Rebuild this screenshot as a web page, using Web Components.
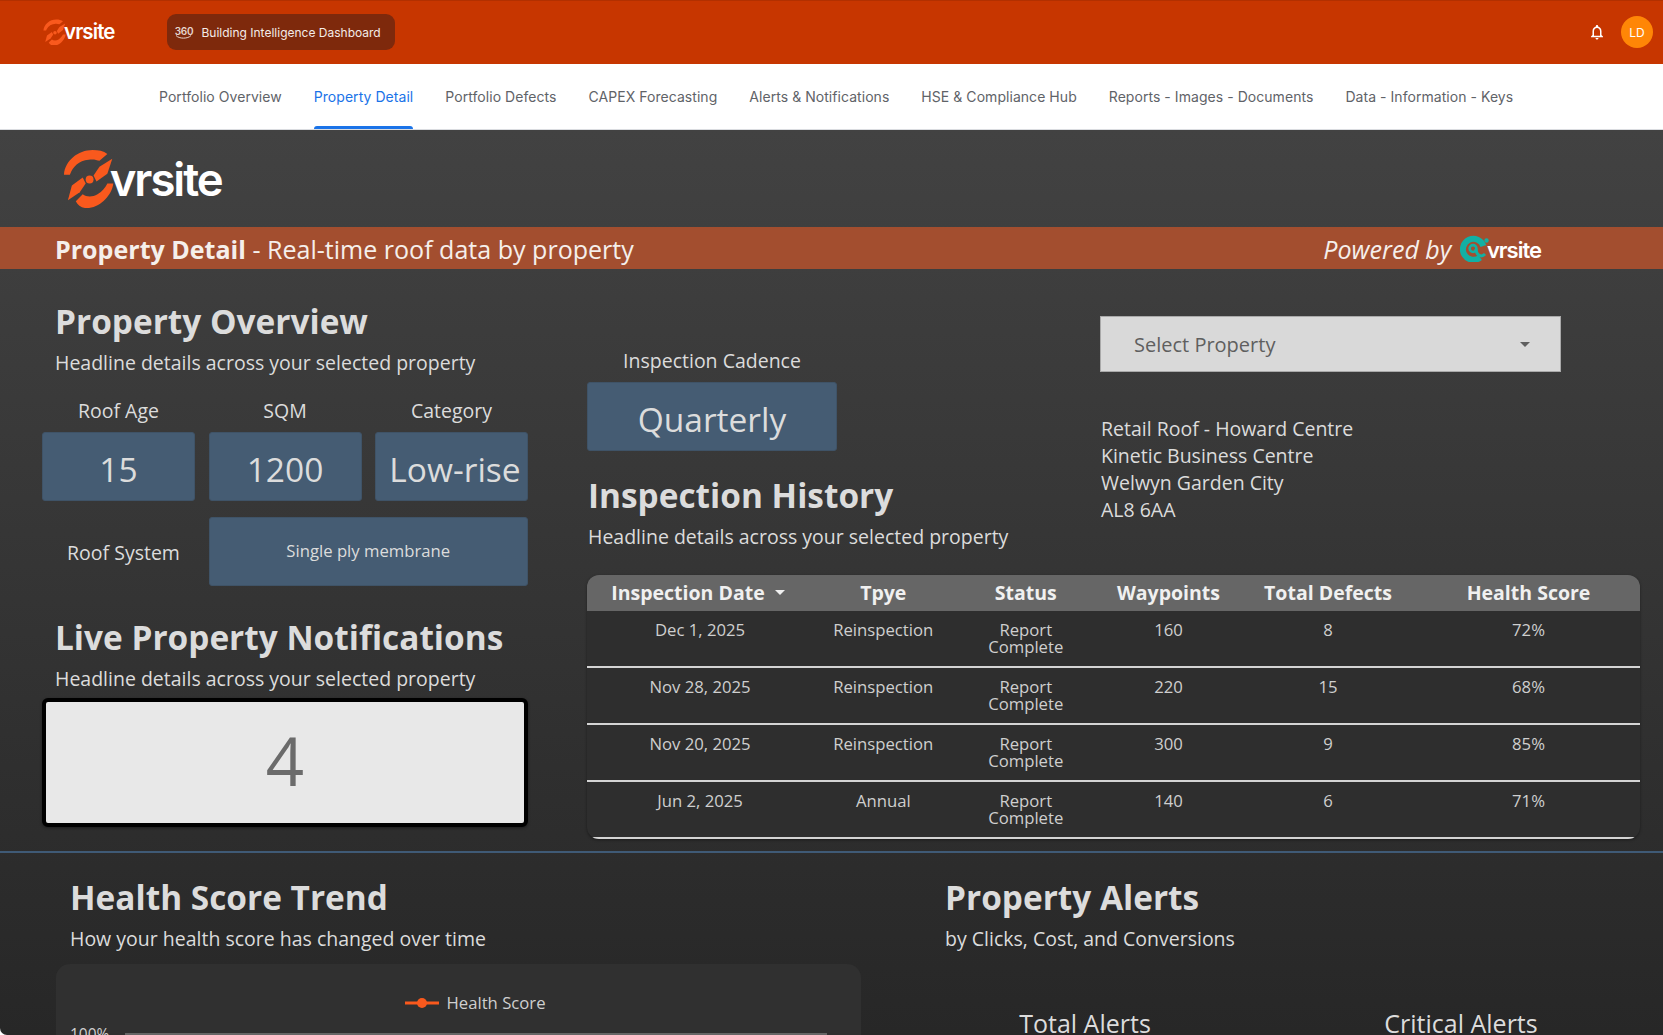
<!DOCTYPE html>
<html lang="en">
<head>
<meta charset="utf-8">
<title>Property Detail</title>
<style>
  html, body { margin: 0; height: 100%; background: #fff; overflow: hidden; }
  body { font-family: "Open Sans", "Liberation Sans", sans-serif; }
</style>
</head>
<body>
<top-bar></top-bar>
<nav-tabs></nav-tabs>
<report-page></report-page>

<script>
/*
 * Logo: the swirl mark plus the wordmark as real text.
 * Scales from font-size on the host, teal="" switches to the Powered by mark.
 */
const logoTemplate = document.createElement('template')
logoTemplate.innerHTML = `
  <style>
    :host {
      display: inline-flex;
      align-items: center;
      color: #fff;
      line-height: 1;
    }
    svg { height: 1.3em; width: auto; flex: none; display: block; }
    span {
      font-family: Inter, "Liberation Sans", sans-serif;
      font-weight: 600;
      letter-spacing: -0.045em;
      margin-left: -0.1em;
      padding-top: 0.06em;
    }
    svg.teal { height: 1.23em; }
    svg.teal + span { margin-left: -0.16em; padding-top: 0.1em; }
  </style>
  <svg viewBox="13 8 52 60">
    <path fill="#f9591d" d="M14 34C15 20 28 9 43 9c6 0 11 1 15 4l-8 7c-3-1-7-2-11-1C29 20 23 26 20 34Z"/>
    <path fill="#f9591d" d="M26 61l7-7c4 3 10 3 15 0 5-3 8-7 10-11h6c-1 11-13 25-27 25-5 0-9-3-11-7Z"/>
    <path fill="#f9591d" d="M63 18 50 26 44 35 47 41 58 33Z"/>
    <path fill="#f9591d" d="M18 60 30 52 36 43 33 37 22 45Z"/>
    <circle cx="40" cy="39" r="4" fill="#f9591d"/>
  </svg>
  <span>vrsite</span>
`
const tealTemplate = document.createElement('template')
tealTemplate.innerHTML = `
  <svg class="teal" viewBox="0 0 30 27">
    <path fill="none" stroke="#12b0a4" stroke-width="6" d="M20 22.5A10.5 10.5 0 1 1 23.4 11"/>
    <circle cx="13" cy="13.5" r="3.4" fill="none" stroke="#12b0a4" stroke-width="2.6"/>
    <path fill="none" stroke="#12b0a4" stroke-width="3" d="M16 14c0 6 5 9 9 5"/>
    <circle cx="26.5" cy="5.5" r="2.2" fill="#12b0a4"/>
  </svg>
`
customElements.define('vrsite-logo',
  class extends HTMLElement {
    constructor () {
      super()
      this.attachShadow({ mode: 'open' })
        .appendChild(logoTemplate.content.cloneNode(true))
      if (this.hasAttribute('teal')) {
        this.shadowRoot.querySelector('svg').replaceWith(tealTemplate.content.cloneNode(true))
      }
    }
  }
)

/*
 * Orange application bar.
 */
const topBarTemplate = document.createElement('template')
topBarTemplate.innerHTML = `
  <style>
    :host {
      display: flex;
      align-items: center;
      box-sizing: border-box;
      height: 64px;
      padding: 0 10px 1px 43px;
      background: #c73600;
      border-top: 1px solid #b23000;
      font-family: Inter, "Liberation Sans", sans-serif;
      color: #fff;
    }
    vrsite-logo { font-size: 20.5px; }
    .pill {
      display: flex;
      align-items: center;
      gap: 9px;
      height: 36px;
      margin-left: 53px;
      padding: 0 14px 0 8px;
      border-radius: 9px;
      background: #7e290c;
      font-size: 12px;
      color: #f4ece8;
    }
    .badge {
      display: flex;
      flex-direction: column;
      align-items: center;
      width: 17px;
      font-size: 10px;
      font-weight: 600;
      line-height: 10px;
      color: #e6d6cf;
      letter-spacing: -0.3px;
    }
    .badge svg { display: block; margin-top: -1px; }
    .spacer { flex: 1; }
    .bell { display: block; margin-right: 15px; }
    .avatar {
      display: grid;
      place-items: center;
      width: 32px;
      height: 32px;
      border-radius: 50%;
      background: #ff8606;
      font-size: 12px;
    }
  </style>
  <vrsite-logo></vrsite-logo>
  <div class="pill">
    <span class="badge">360
      <svg width="17" height="4" viewBox="0 0 17 4"><path d="M1 .5c3 3.5 12 3.5 15 0" fill="none" stroke="#e6d6cf" stroke-width="1"/></svg>
    </span>
    Building Intelligence Dashboard
  </div>
  <div class="spacer"></div>
  <svg class="bell" width="18" height="18" viewBox="0 0 24 24" fill="#fff"><path d="M12 22c1.1 0 2-.9 2-2h-4c0 1.1.9 2 2 2zm6-6v-5c0-3.07-1.63-5.64-4.5-6.32V4c0-.83-.67-1.5-1.5-1.5s-1.5.67-1.5 1.5v.68C7.64 5.36 6 7.92 6 11v5l-2 2v1h16v-1l-2-2zm-2 1H8v-6c0-2.48 1.51-4.5 4-4.5s4 2.02 4 4.5v6z"/></svg>
  <div class="avatar">LD</div>
`
customElements.define('top-bar',
  class extends HTMLElement {
    constructor () {
      super()
      this.attachShadow({ mode: 'open' })
        .appendChild(topBarTemplate.content.cloneNode(true))
    }
  }
)

/*
 * White tab row.
 */
const navTemplate = document.createElement('template')
navTemplate.innerHTML = `
  <style>
    :host {
      display: flex;
      gap: 32px;
      box-sizing: border-box;
      height: 66px;
      padding-left: 159px;
      background: #fff;
      border-bottom: 1px solid #dadce0;
      font-family: Inter, "Liberation Sans", sans-serif;
      font-size: 14px;
      letter-spacing: 0.05px;
      color: #5f6368;
    }
    a {
      display: flex;
      align-items: center;
      position: relative;
      white-space: nowrap;
    }
    a.active { color: #1a73e8; }
    a.active::after {
      content: '';
      position: absolute;
      left: 0;
      right: 0;
      bottom: 0;
      height: 3px;
      border-radius: 3px 3px 0 0;
      background: #1a73e8;
    }
  </style>
  <a>Portfolio Overview</a>
  <a class="active">Property Detail</a>
  <a>Portfolio Defects</a>
  <a>CAPEX Forecasting</a>
  <a>Alerts &amp; Notifications</a>
  <a>HSE &amp; Compliance Hub</a>
  <a>Reports - Images - Documents</a>
  <a>Data - Information - Keys</a>
`
customElements.define('nav-tabs',
  class extends HTMLElement {
    constructor () {
      super()
      this.attachShadow({ mode: 'open' })
        .appendChild(navTemplate.content.cloneNode(true))
    }
  }
)

/*
 * Heading with a sub line, used by every panel.
 */
const headTemplate = document.createElement('template')
headTemplate.innerHTML = `
  <style>
    :host { display: block; color: #dcdcdc; }
    h2 { margin: -1px 0 0; font-size: 33.4px; line-height: 44px; font-weight: 700; white-space: nowrap; }
    p { margin: 6px 0 0; font-size: 19.5px; line-height: 28px; white-space: nowrap; }
  </style>
  <h2><slot name="title"></slot></h2>
  <p><slot></slot></p>
`
customElements.define('section-head',
  class extends HTMLElement {
    constructor () {
      super()
      this.attachShadow({ mode: 'open' })
        .appendChild(headTemplate.content.cloneNode(true))
    }
  }
)

/*
 * Blue scorecard.
 */
const tileTemplate = document.createElement('template')
tileTemplate.innerHTML = `
  <style>
    :host {
      display: flex;
      align-items: center;
      justify-content: center;
      box-sizing: border-box;
      height: 69px;
      padding-top: 4px;
      background: #455c73;
      border: 1px solid #3f5367;
      border-radius: 3px;
      color: #dcdcdc;
      font-size: 33.5px;
      white-space: nowrap;
    }
    :host([small]) { font-size: 16.7px; padding-top: 0; padding-bottom: 2px; }
    :host([nudge]) { padding-left: 7px; }
  </style>
  <slot></slot>
`
customElements.define('stat-tile',
  class extends HTMLElement {
    constructor () {
      super()
      this.attachShadow({ mode: 'open' })
        .appendChild(tileTemplate.content.cloneNode(true))
    }
  }
)

/*
 * Inspection history table, rows come from this list.
 */
const inspections = [
  ['Dec 1, 2025', 'Reinspection', 'Report Complete', '160', '8', '72%'],
  ['Nov 28, 2025', 'Reinspection', 'Report Complete', '220', '15', '68%'],
  ['Nov 20, 2025', 'Reinspection', 'Report Complete', '300', '9', '85%'],
  ['Jun 2, 2025', 'Annual', 'Report Complete', '140', '6', '71%']
]
const tableTemplate = document.createElement('template')
tableTemplate.innerHTML = `
  <style>
    :host {
      display: block;
      border-radius: 12px;
      background: #2e2e2e;
      box-shadow: 0 1px 3px rgba(0, 0, 0, 0.4);
      overflow: hidden;
      font-size: 16.7px;
      line-height: 17px;
      color: #cfcfcf;
    }
    .row {
      display: grid;
      grid-template-columns: 226px 140.5px 144.5px 141px 178px 1fr;
      text-align: center;
    }
    .head {
      box-sizing: border-box;
      height: 36px;
      padding-bottom: 2px;
      align-items: center;
      background: #666;
      color: #f0f0f0;
      font-size: 19.5px;
      font-weight: 700;
    }
    .head i {
      display: inline-block;
      margin: 0 4px 3px 5px;
      border: 5px solid transparent;
      border-top: 5px solid #f0f0f0;
      border-bottom: 0;
      vertical-align: middle;
    }
    .body {
      box-sizing: border-box;
      height: 57px;
      padding-top: 10px;
      border-bottom: 2px solid #d4d4d4;
    }
    .body div:nth-child(3) { padding: 0 30px; }
  </style>
  <div class="row head">
    <div>Inspection Date <i></i></div><div>Tpye</div><div>Status</div><div>Waypoints</div><div>Total Defects</div><div>Health Score</div>
  </div>
`
customElements.define('inspection-table',
  class extends HTMLElement {
    constructor () {
      super()
      this.attachShadow({ mode: 'open' })
        .appendChild(tableTemplate.content.cloneNode(true))

      for (const row of inspections) {
        const rowEl = document.createElement('div')
        rowEl.className = 'row body'
        for (const value of row) {
          const cell = document.createElement('div')
          cell.textContent = value
          rowEl.append(cell)
        }
        this.shadowRoot.append(rowEl)
      }
    }
  }
)

/*
 * Property dropdown.
 */
const selectTemplate = document.createElement('template')
selectTemplate.innerHTML = `
  <style>
    :host {
      display: flex;
      align-items: center;
      justify-content: space-between;
      box-sizing: border-box;
      height: 56px;
      padding: 0 30px 0 33px;
      background: #d9d9d9;
      border: 1px solid #a9a9a9;
      color: #5f5f5f;
      font-size: 20px;
    }
    i {
      width: 0;
      border: 5px solid transparent;
      border-top: 5px solid #5f5f5f;
      border-bottom: 0;
    }
  </style>
  <slot></slot><i></i>
`
customElements.define('property-select',
  class extends HTMLElement {
    constructor () {
      super()
      this.attachShadow({ mode: 'open' })
        .appendChild(selectTemplate.content.cloneNode(true))
    }
  }
)

/*
 * Line chart card, only its legend and top gridline are inside the window.
 */
const trendTemplate = document.createElement('template')
trendTemplate.innerHTML = `
  <style>
    :host {
      display: block;
      box-sizing: border-box;
      height: 110px;
      margin-left: -14px;
      width: 805px;
      padding-top: 26px;
      background: #303030;
      border-radius: 14px 14px 0 0;
      color: #cfcfcf;
      font-size: 16.7px;
      line-height: 26px;
    }
    .legend { display: flex; justify-content: center; align-items: center; gap: 7px; padding-left: 34px; }
    .legend svg { display: block; margin-top: -1px; }
    .axis { display: flex; align-items: center; margin-top: 5px; padding: 0 34px 0 14px; font-size: 15.5px; }
    .axis b { flex: 1; height: 2px; margin-left: 16px; background: #666; }
  </style>
  <div class="legend">
    <svg width="34" height="12" viewBox="0 0 34 12"><path d="M0 6h34" stroke="#f9591d" stroke-width="3"/><circle cx="17" cy="6" r="5" fill="#f9591d"/></svg>
    Health Score
  </div>
  <div class="axis">100%<b></b></div>
`
customElements.define('trend-card',
  class extends HTMLElement {
    constructor () {
      super()
      this.attachShadow({ mode: 'open' })
        .appendChild(trendTemplate.content.cloneNode(true))
    }
  }
)

/*
 * The dark report below the tabs.
 */
const reportTemplate = document.createElement('template')
reportTemplate.innerHTML = `
  <style>
    :host {
      display: block;
      height: calc(100vh - 130px);
      overflow: hidden;
      background: linear-gradient(#424242, #272727);
      border-bottom-left-radius: 7px;
      color: #dcdcdc;
      font-family: "Open Sans", "Liberation Sans", sans-serif;
    }
    .brand { height: 97px; box-sizing: border-box; padding: 19px 0 0 63px; }
    .brand vrsite-logo { font-size: 45.5px; }

    .banner {
      display: flex;
      align-items: center;
      justify-content: space-between;
      box-sizing: border-box;
      height: 42px;
      padding: 1px 122px 0 55px;
      background: #a34e2f;
      color: #f5efeb;
      font-size: 25.05px;
    }
    .banner b { font-weight: 700; }
    .powered { display: flex; align-items: center; gap: 9px; font-style: italic; }
    .powered vrsite-logo { font-size: 22px; font-style: normal; }

    .main {
      display: grid;
      grid-template-columns: 486px 1053px;
      column-gap: 59px;
      height: 584px;
      box-sizing: border-box;
      padding-left: 42px;
      border-bottom: 2px solid #3f5a76;
    }
    .left { padding-top: 31px; }
    .left section-head { margin-left: 13px; }
    .cards {
      display: grid;
      grid-template-columns: 153px 153px 153px;
      column-gap: 13.5px;
      margin-top: 20px;
    }
    .label { font-size: 19.5px; line-height: 28px; text-align: center; white-space: nowrap; }
    .cards stat-tile { margin-top: 7px; }
    .system { display: grid; grid-template-columns: 153px 1fr; column-gap: 13.5px; margin-top: 16px; align-items: center; }
    .system .label { padding: 2px 0 0 10px; }
    .left section-head.live { margin-top: 30px; }
    .count {
      display: flex;
      align-items: center;
      justify-content: center;
      box-sizing: border-box;
      height: 129px;
      padding-bottom: 6px;
      margin-top: 5px;
      background: #e8e8e8;
      border: 4px solid #000;
      border-radius: 6px;
      box-shadow: 0 1px 3px rgba(0, 0, 0, 0.4);
      color: #6b6b6b;
      font-size: 67px;
      font-weight: 400;
    }

    .right { display: flex; flex-direction: column; }
    .upper { display: grid; grid-template-columns: 513px 461px; height: 306px; box-sizing: border-box; }
    .cadence { padding-top: 78px; }
    .cadence .label { width: 250px; }
    .cadence stat-tile { width: 250px; margin-top: 7px; }
    .cadence section-head { margin: 23px 0 0 1px; }
    .picker { padding-top: 47px; }
    address {
      margin-top: 43px;
      font-style: normal;
      font-size: 19.5px;
      line-height: 27px;
      padding-left: 1px;
    }

    .lower {
      display: grid;
      grid-template-columns: 875px 1fr;
      padding-left: 70px;
      padding-top: 23px;
    }
    .alerts {
      display: grid;
      grid-template-columns: 376px 376px;
      margin: 53px 0 0 -48px;
      font-size: 25px;
      line-height: 34px;
      text-align: center;
    }
    trend-card { margin-top: 11px; }
  </style>
  <div class="brand"><vrsite-logo></vrsite-logo></div>
  <div class="banner">
    <div><b>Property Detail</b> - Real-time roof data by property</div>
    <div class="powered">Powered by <vrsite-logo teal></vrsite-logo></div>
  </div>

  <div class="main">
    <div class="left">
      <section-head><span slot="title">Property Overview</span>Headline details across your selected property</section-head>
      <div class="cards">
        <div class="label">Roof Age</div><div class="label">SQM</div><div class="label">Category</div>
        <stat-tile>15</stat-tile><stat-tile>1200</stat-tile><stat-tile nudge>Low-rise</stat-tile>
      </div>
      <div class="system">
        <div class="label">Roof System</div>
        <stat-tile small>Single ply membrane</stat-tile>
      </div>
      <section-head class="live"><span slot="title">Live Property Notifications</span>Headline details across your selected property</section-head>
      <div class="count">4</div>
    </div>

    <div class="right">
      <div class="upper">
        <div class="cadence">
          <div class="label">Inspection Cadence</div>
          <stat-tile>Quarterly</stat-tile>
          <section-head><span slot="title">Inspection History</span>Headline details across your selected property</section-head>
        </div>
        <div class="picker">
          <property-select>Select Property</property-select>
          <address>Retail Roof - Howard Centre<br>Kinetic Business Centre<br>Welwyn Garden City<br>AL8 6AA</address>
        </div>
      </div>
      <inspection-table></inspection-table>
    </div>
  </div>

  <div class="lower">
    <div>
      <section-head><span slot="title">Health Score Trend</span>How your health score has changed over time</section-head>
      <trend-card></trend-card>
    </div>
    <div>
      <section-head><span slot="title">Property Alerts</span>by Clicks, Cost, and Conversions</section-head>
      <div class="alerts"><div>Total Alerts</div><div>Critical Alerts</div></div>
    </div>
  </div>
`
customElements.define('report-page',
  class extends HTMLElement {
    constructor () {
      super()
      this.attachShadow({ mode: 'open' })
        .appendChild(reportTemplate.content.cloneNode(true))
    }
  }
)
</script>
</body>
</html>
